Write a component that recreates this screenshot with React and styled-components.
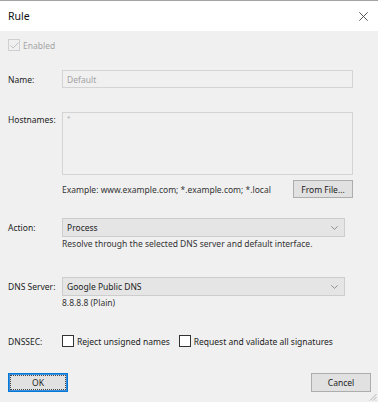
import React from 'react';
import styled, { createGlobalStyle } from 'styled-components';

const GlobalStyle = createGlobalStyle`
  html, body {
    margin: 0;
    padding: 0;
    background: #f0f0f0;
  }
  body {
    font-family: "Noto Sans", "Open Sans", sans-serif;
  }
`;

const Window = styled.div`
  position: relative;
  box-sizing: border-box;
  width: 378px;
  height: 402px;
  display: flex;
  flex-direction: column;
  border-top: 1px solid #a3a3a3;
  background: #f0f0f0;
  font-size: 8.5px;
  color: #222;
`;

const TitleBar = styled.div`
  height: 30px;
  flex: none;
  display: flex;
  align-items: center;
  justify-content: space-between;
  padding: 0 10px 0 8px;
  background: #ffffff;
`;

const Title = styled.span`
  font-size: 10.5px;
  color: #111;
`;

const CloseIcon = styled.svg`
  width: 9px;
  height: 9px;
  stroke: #444;
  stroke-width: 0.9;
`;

const Body = styled.div`
  flex: 1;
  display: flex;
  flex-direction: column;
  padding: 0 25px 10px 8px;
`;

/* plain row of a check box and its label */
const CheckRow = styled.label`
  display: flex;
  align-items: center;
  gap: ${({ $gap }) => $gap || 3}px;
  height: 14px;
  margin-top: ${({ $top }) => $top || 0}px;
  margin-right: ${({ $right }) => $right || 0}px;
  color: ${({ $disabled }) => ($disabled ? '#a5a5a5' : '#222')};
`;

const Box = styled.span`
  box-sizing: border-box;
  width: 12px;
  height: 12px;
  display: flex;
  align-items: center;
  justify-content: center;
  border: 1px solid ${({ $disabled }) => ($disabled ? '#cfcfcf' : '#333')};
  background: ${({ $disabled }) => ($disabled ? '#f0f0f0' : '#fff')};
`;

const Field = styled.div`
  display: grid;
  grid-template-columns: 54px 1fr;
  align-items: ${({ $alignTop }) => ($alignTop ? 'start' : 'center')};
  margin-top: ${({ $top }) => $top || 0}px;
`;

const Label = styled.span`
  padding-top: ${({ $pad }) => $pad || 0}px;
  color: #222;
`;

const TextBox = styled.div`
  box-sizing: border-box;
  height: ${({ $height }) => $height}px;
  padding: ${({ $multi }) => ($multi ? '1px 4px' : '0 4px')};
  display: flex;
  align-items: ${({ $multi }) => ($multi ? 'flex-start' : 'center')};
  border: 1px solid #d4d4d4;
  background: #f0f0f0;
  color: #a3a3a3;
  font-size: ${({ $multi }) => ($multi ? '6px' : 'inherit')};
`;

const ExampleLine = styled.div`
  display: flex;
  align-items: center;
  justify-content: space-between;
`;

const Hint = styled.span`
  color: #333;
`;

const Button = styled.button`
  box-sizing: border-box;
  width: 60px;
  height: ${({ $height }) => $height || 19}px;
  padding: 0;
  font-family: inherit;
  font-size: 8.5px;
  color: #222;
  background: #e1e1e1;
  border: 1px solid ${({ $primary }) => ($primary ? '#0078d7' : '#adadad')};
  box-shadow: ${({ $primary }) => ($primary ? 'inset 0 0 0 1px #3d8fd9' : 'none')};
  outline: ${({ $primary }) => ($primary ? '1px dotted #444' : 'none')};
  outline-offset: -3px;
`;

const Select = styled.div`
  box-sizing: border-box;
  height: 19px;
  margin-right: 8px;
  padding: 0 6px 0 4px;
  display: flex;
  align-items: center;
  justify-content: space-between;
  background: #e5e5e5;
  border: 1px solid #cdcdcd;
  color: #222;
`;

const Chevron = styled.svg`
  width: 7px;
  height: 4px;
  fill: none;
  stroke: #7a7a7a;
  stroke-width: 0.8;
`;

const Description = styled.div`
  height: 14px;
  line-height: 14px;
  color: #333;
`;

const Options = styled.div`
  display: flex;
  align-items: center;
`;

const Footer = styled.div`
  margin-top: auto;
  margin-right: -18px;
  display: flex;
  justify-content: space-between;
`;

const Grip = styled.svg`
  position: absolute;
  right: 1px;
  bottom: 1px;
  width: 9px;
  height: 9px;
  stroke: #b5b5b5;
  stroke-width: 1;
`;

const Check = ({ checked, disabled, children, ...rest }) => (
  <CheckRow $disabled={disabled} {...rest}>
    <Box $disabled={disabled}>
      {checked && (
        <svg width="9" height="7" viewBox="0 0 9 7" fill="none" stroke="#c0c0c0" strokeWidth="1">
          <path d="M0.5 3.5 L3.2 6 L8.5 0.5" />
        </svg>
      )}
    </Box>
    {children}
  </CheckRow>
);

const DropDown = ({ children }) => (
  <Select>
    <span>{children}</span>
    <Chevron viewBox="0 0 7 4">
      <path d="M0.3 0.3 L3.5 3.4 L6.7 0.3" />
    </Chevron>
  </Select>
);

const App = () => (
  <>
    <GlobalStyle />
    <Window>
      <TitleBar>
        <Title>Rule</Title>
        <CloseIcon viewBox="0 0 9 9">
          <path d="M0.3 0.3 L8.7 8.7 M8.7 0.3 L0.3 8.7" />
        </CloseIcon>
      </TitleBar>
      <Body>
        <Check checked disabled $top={7}>Enabled</Check>

        <Field $top={18}>
          <Label>Name:</Label>
          <TextBox $height={18}>Default</TextBox>
        </Field>

        <Field $top={24} $alignTop>
          <Label $pad={2}>Hostnames:</Label>
          <TextBox $height={63} $multi>*</TextBox>
        </Field>

        <Field $top={5}>
          <span />
          <ExampleLine>
            <Hint>Example: www.example.com; *.example.com; *.local</Hint>
            <Button $height={18}>From File...</Button>
          </ExampleLine>
        </Field>

        <Field $top={20}>
          <Label>Action:</Label>
          <DropDown>Process</DropDown>
        </Field>
        <Field>
          <span />
          <Description>Resolve through the selected DNS server and default interface.</Description>
        </Field>

        <Field $top={26}>
          <Label>DNS Server:</Label>
          <DropDown>Google Public DNS</DropDown>
        </Field>
        <Field>
          <span />
          <Description>8.8.8.8 (Plain)</Description>
        </Field>

        <Field $top={24}>
          <Label>DNSSEC:</Label>
          <Options>
            <Check $right={9}>Reject unsigned names</Check>
            <Check>Request and validate all signatures</Check>
          </Options>
        </Field>

        <Footer>
          <Button $primary>OK</Button>
          <Button>Cancel</Button>
        </Footer>
      </Body>
      <Grip viewBox="0 0 9 9">
        <path d="M8.5 2 L2 8.5 M8.5 5 L5 8.5 M8.5 8 L8 8.5" />
      </Grip>
    </Window>
  </>
);

export default App;
